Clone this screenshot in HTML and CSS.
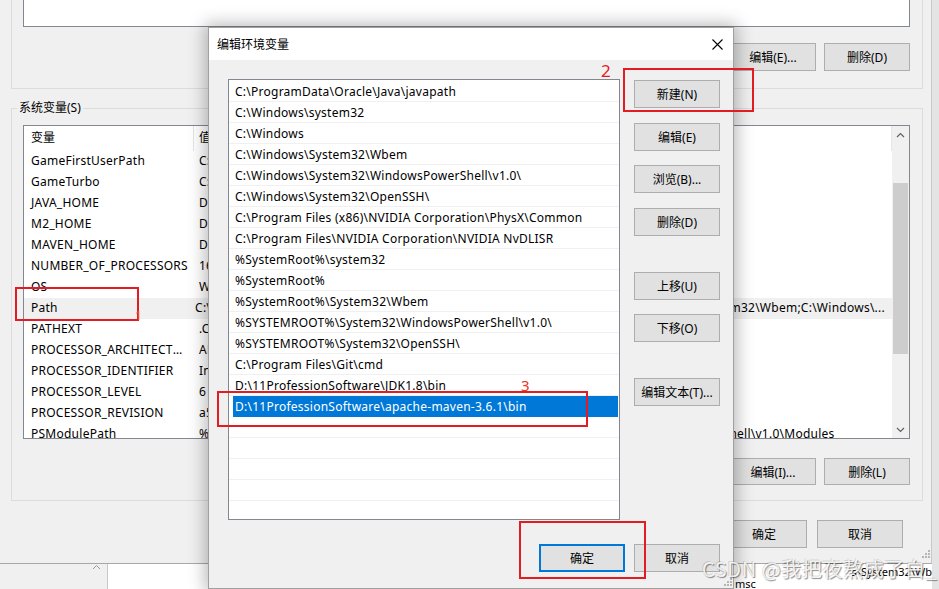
FILE: index.html
```html
<!DOCTYPE html>
<html lang="zh-CN">
<head>
<meta charset="utf-8">
<title>编辑环境变量</title>
<link rel="stylesheet" href="styles.css">
</head>
<body>
<div class="screen">
  <div class="env-window">
    <fieldset class="group user-group">
      <div class="list user-list"></div>
      <div class="btn-row">
        <button class="btn">新建(N)...</button>
        <button class="btn">编辑(E)...</button>
        <button class="btn">删除(D)</button>
      </div>
    </fieldset>

    <fieldset class="group sys-group">
      <legend>系统变量(S)</legend>
      <div class="list sys-list">
        <div class="sys-content">
          <div class="sys-head"><div class="col-name">变量</div><div class="col-val">值</div></div>
          <div class="sys-row"><div class="col-name">GameFirstUserPath</div><div class="col-val">C:\Program Files (x86)\GameFirst</div></div>
          <div class="sys-row"><div class="col-name">GameTurbo</div><div class="col-val">C:\Program Files\GameTurbo</div></div>
          <div class="sys-row"><div class="col-name">JAVA_HOME</div><div class="col-val">D:\11ProfessionSoftware\JDK1.8</div></div>
          <div class="sys-row"><div class="col-name">M2_HOME</div><div class="col-val">D:\11ProfessionSoftware\apache-maven-3.6.1</div></div>
          <div class="sys-row"><div class="col-name">MAVEN_HOME</div><div class="col-val">D:\11ProfessionSoftware\apache-maven-3.6.1</div></div>
          <div class="sys-row"><div class="col-name">NUMBER_OF_PROCESSORS</div><div class="col-val">16</div></div>
          <div class="sys-row"><div class="col-name">OS</div><div class="col-val">Windows_NT</div></div>
          <div class="sys-row is-current"><div class="col-name">Path</div><div class="col-val val-end"><span>C:\ProgramData\Oracle\Java\javapath;C:\Windows\system32;C:\Windows;C:\Windows\System32\Wbem;C:\Windows\...</span></div></div>
          <div class="sys-row"><div class="col-name">PATHEXT</div><div class="col-val">.COM;.EXE;.BAT;.CMD;.VBS;.VBE;.JS;.JSE;.WSF;.WSH;.MSC</div></div>
          <div class="sys-row"><div class="col-name">PROCESSOR_ARCHITECTURE</div><div class="col-val">AMD64</div></div>
          <div class="sys-row"><div class="col-name">PROCESSOR_IDENTIFIER</div><div class="col-val">Intel64 Family 6 Model 165 Stepping 5, GenuineIntel</div></div>
          <div class="sys-row"><div class="col-name">PROCESSOR_LEVEL</div><div class="col-val">6</div></div>
          <div class="sys-row"><div class="col-name">PROCESSOR_REVISION</div><div class="col-val">a505</div></div>
          <div class="sys-row"><div class="col-name">PSModulePath</div><div class="col-val">%ProgramFiles%\WindowsPowerShell\Modules;%SystemRoot%\system32\WindowsPowerShell\v1.0\Modules</div></div>
        </div>
        <div class="vscroll">
          <span class="arrow"><svg width="9" height="6" viewBox="0 0 9 6"><path d="M1 5 L4.5 1.5 L8 5" fill="none" stroke="#606060" stroke-width="1.2"/></svg></span>
          <div class="thumb"></div>
          <div class="track-fill"></div>
          <span class="arrow"><svg width="9" height="6" viewBox="0 0 9 6"><path d="M1 1 L4.5 4.5 L8 1" fill="none" stroke="#606060" stroke-width="1.2"/></svg></span>
        </div>
      </div>
      <div class="btn-row">
        <button class="btn">新建(W)...</button>
        <button class="btn">编辑(I)...</button>
        <button class="btn">删除(L)</button>
      </div>
    </fieldset>

    <div class="footer-row">
      <button class="btn">确定</button>
      <button class="btn">取消</button>
    </div>
    <span class="grip"><svg width="8" height="8" viewBox="0 0 8 8"><g fill="#b5b5b5"><rect x="6" y="0" width="2" height="2"/><rect x="3" y="3" width="2" height="2"/><rect x="6" y="3" width="2" height="2"/><rect x="0" y="6" width="2" height="2"/><rect x="3" y="6" width="2" height="2"/><rect x="6" y="6" width="2" height="2"/></g></svg></span>
  </div>

  <div class="right-strip"></div>

  <div class="bottom-strip">
    <div class="bs-left"><svg width="9" height="6" viewBox="0 0 9 6"><path d="M1 5 L4.5 1.5 L8 5" fill="none" stroke="#9a9a9a" stroke-width="1"/></svg></div>
    <div class="bs-white">
      <span class="bs-path">s\System32\Wb</span>
      <span class="bs-msc">msc</span>
    </div>
  </div>

  <div class="dialog">
    <div class="titlebar">
      <span class="title">编辑环境变量</span>
      <svg class="close" width="11" height="11" viewBox="0 0 11 11"><path d="M0.5 0.5 L10.5 10.5 M10.5 0.5 L0.5 10.5" stroke="#000" stroke-width="1.1"/></svg>
    </div>
    <div class="dialog-body">
      <div class="path-list">
        <div class="path-row">C:\ProgramData\Oracle\Java\javapath</div>
        <div class="path-row">C:\Windows\system32</div>
        <div class="path-row">C:\Windows</div>
        <div class="path-row">C:\Windows\System32\Wbem</div>
        <div class="path-row">C:\Windows\System32\WindowsPowerShell\v1.0\</div>
        <div class="path-row">C:\Windows\System32\OpenSSH\</div>
        <div class="path-row">C:\Program Files (x86)\NVIDIA Corporation\PhysX\Common</div>
        <div class="path-row">C:\Program Files\NVIDIA Corporation\NVIDIA NvDLISR</div>
        <div class="path-row">%SystemRoot%\system32</div>
        <div class="path-row">%SystemRoot%</div>
        <div class="path-row">%SystemRoot%\System32\Wbem</div>
        <div class="path-row">%SYSTEMROOT%\System32\WindowsPowerShell\v1.0\</div>
        <div class="path-row">%SYSTEMROOT%\System32\OpenSSH\</div>
        <div class="path-row">C:\Program Files\Git\cmd</div>
        <div class="path-row">D:\11ProfessionSoftware\JDK1.8\bin</div>
        <div class="path-row is-editing"><span class="edit">D:\11ProfessionSoftware\apache-maven-3.6.1\bin</span></div>
        <div class="path-row"></div>
        <div class="path-row"></div>
        <div class="path-row"></div>
        <div class="path-row"></div>
        <div class="path-row"></div>
      </div>
      <div class="side-buttons">
        <button class="btn b-new">新建(N)</button>
        <button class="btn b-edit">编辑(E)</button>
        <button class="btn b-browse">浏览(B)...</button>
        <button class="btn b-del">删除(D)</button>
        <button class="btn b-up">上移(U)</button>
        <button class="btn b-down">下移(O)</button>
        <button class="btn b-text">编辑文本(T)...</button>
      </div>
      <div class="dialog-footer">
        <button class="btn btn-default">确定</button>
        <button class="btn">取消</button>
      </div>
    </div>
    <span class="dlg-grip"><svg width="9" height="9" viewBox="0 0 9 9"><g fill="#b5b5b5"><rect x="7" y="1" width="2" height="2"/><rect x="4" y="4" width="2" height="2"/><rect x="7" y="4" width="2" height="2"/><rect x="1" y="7" width="2" height="2"/><rect x="4" y="7" width="2" height="2"/><rect x="7" y="7" width="2" height="2"/></g></svg></span>
  </div>

  <div class="mark mark-1"></div>
  <span class="num num-1">1</span>
  <div class="mark mark-2"></div>
  <span class="num num-2">2</span>
  <div class="mark mark-3"></div>
  <span class="num num-3">3</span>
  <div class="mark mark-4"></div>

  <div class="watermark">CSDN @我把夜熬成了白_</div>
</div>
</body>
</html>
```

FILE: styles.css
```css
* { box-sizing: border-box; }
html, body { margin: 0; padding: 0; }
body {
  width: 939px;
  height: 589px;
  overflow: hidden;
  background: #f0f0f0;
  font-family: "Noto Sans", "Noto Sans CJK SC", sans-serif;
  font-size: 12px;
  color: #000;
}
.screen {
  position: relative;
  width: 939px;
  height: 589px;
  display: grid;
  grid-template-columns: 932px 7px;
  grid-template-rows: 564px 25px;
  overflow: hidden;
}

/* ---------- background window ---------- */
.env-window {
  grid-column: 1;
  grid-row: 1;
  position: relative;
  background: #f0f0f0;
  border-bottom: 1px solid #a8a8a8;
  border-right: 1px solid #c8c8c8;
  display: flex;
  flex-direction: column;
  overflow: hidden;
}
.group {
  margin: 0 0 0 11px;
  width: 912px;
  min-width: 0;
  border: 1px solid #dcdcdc;
  padding: 0 12px 0 11px;
}
.user-group {
  margin-top: -40px;
  padding-top: 10px;
  padding-bottom: 17px;
}
.list {
  background: #fff;
  border: 1px solid #828790;
}
.user-list { height: 56px; }
.btn-row {
  display: flex;
  justify-content: flex-end;
  gap: 8px;
}
.user-group .btn-row { margin-top: 16px; }
.btn {
  width: 86px;
  height: 28px;
  padding: 0;
  background: #e1e1e1;
  border: 1px solid #adadad;
  font: inherit;
  font-size: 12px;
  color: #000;
  white-space: nowrap;
}

.sys-group {
  margin-top: 11px;
  padding: 9px 12px 15px 11px;
}
.sys-group legend {
  margin-left: -6px;
  padding: 0 2px;
  line-height: 16px;
  font-size: 12px;
}
.sys-list {
  height: 314px;
  display: flex;
}
.sys-content {
  flex: 1;
  min-width: 0;
  overflow: hidden;
  background: #fff;
}
.sys-head {
  display: flex;
  height: 25px;
  line-height: 24px;
}
.sys-head .col-name { border-right: 1px solid #e5e5e5; }
.sys-head .col-val { border-right: 1px solid #e5e5e5; }
.sys-row {
  display: flex;
  height: 21px;
  line-height: 20px;
  letter-spacing: 0.25px;
}
.sys-row.is-current { background: #f0f0f0; }
.col-name {
  width: 170px;
  flex: none;
  padding: 0 3px 0 7px;
  overflow: hidden;
  white-space: nowrap;
  text-overflow: ellipsis;
}
.col-val {
  flex: 1;
  min-width: 0;
  padding: 0 4px 0 5px;
  overflow: hidden;
  white-space: nowrap;
  text-overflow: ellipsis;
}
.val-end {
  display: flex;
  justify-content: flex-end;
  padding-right: 7px;
}
.val-end span { flex: none; }

.vscroll {
  width: 17px;
  flex: none;
  background: #f0f0f0;
  display: flex;
  flex-direction: column;
  align-items: center;
}
.arrow {
  width: 17px;
  height: 17px;
  display: flex;
  align-items: center;
  justify-content: center;
}
.thumb {
  width: 15px;
  height: 171px;
  margin-top: 40px;
  background: #cdcdcd;
}
.track-fill { flex: 1; }
.sys-group .btn-row { margin-top: 19px; }
.sys-group .btn-row .btn { height: 27px; }

.footer-row {
  display: flex;
  justify-content: flex-end;
  gap: 10px;
  margin-top: 19px;
  margin-right: 28px;
}
.grip {
  position: absolute;
  right: 1px;
  bottom: 5px;
  line-height: 0;
}

.right-strip {
  grid-column: 2;
  grid-row: 1 / span 2;
  background: #e4e4e4;
}
.bottom-strip {
  grid-column: 1;
  grid-row: 2;
  display: flex;
  background: #fff;
}
.bs-left {
  width: 108px;
  background: #f0f0f0;
  border-right: 1px solid #c8c8c8;
  display: flex;
  justify-content: flex-end;
  align-items: flex-start;
  padding: 0 6px 0 0;
  line-height: 0;
}
.bs-white {
  flex: 1;
  display: grid;
  grid-template-columns: 1fr auto;
  font-size: 11px;
  line-height: 12px;
}
.bs-path { grid-column: 2; grid-row: 1; padding-top: 2px; }
.bs-msc { grid-column: 1; grid-row: 2; padding-left: 627px; }

/* ---------- dialog ---------- */
.dialog {
  position: absolute;
  left: 208px;
  top: 27px;
  width: 526px;
  height: 562px;
  background: #f0f0f0;
  border: 1px solid #a0a0a0;
  box-shadow: 0 0 16px 3px rgba(0, 0, 0, 0.28);
}
.titlebar {
  height: 32px;
  background: #fff;
  display: flex;
  align-items: center;
  justify-content: space-between;
  padding: 0 10px 0 8px;
}
.title { font-size: 12px; }
.close { display: block; }
.dialog-body {
  display: grid;
  grid-template-columns: 392px 86px;
  column-gap: 14px;
  padding: 19px 13px 0 19px;
}
.path-list {
  height: 441px;
  background: #fff;
  border: 1px solid #828790;
  padding-top: 1px;
  overflow: hidden;
}
.path-row {
  height: 21px;
  border-bottom: 1px solid #f0f0f0;
  padding-left: 6px;
  line-height: 21px;
  white-space: nowrap;
  letter-spacing: 0.25px;
}
.path-row.is-editing {
  border-bottom: none;
  padding: 0 1px 0 4px;
}
.edit {
  display: block;
  height: 21px;
  line-height: 21px;
  padding-left: 2px;
  background: #0078d7;
  color: #fff;
}
.side-buttons {
  display: flex;
  flex-direction: column;
  padding-top: 1px;
}
.b-edit, .b-del { margin-top: 15px; }
.b-browse, .b-down { margin-top: 14px; }
.b-up, .b-text { margin-top: 36px; }
.dialog-footer {
  grid-column: 1 / -1;
  display: flex;
  justify-content: flex-end;
  gap: 9px;
  margin-top: 24px;
}
.btn-default { border: 2px solid #0078d7; }
.dlg-grip {
  position: absolute;
  right: 1px;
  bottom: 2px;
  line-height: 0;
}

/* ---------- annotations ---------- */
.mark {
  position: absolute;
  border: 2px solid #e31b23;
}
.mark-1 { left: 15px; top: 287px; width: 124px; height: 34px; }
.mark-2 { left: 623px; top: 68px; width: 131px; height: 44px; }
.mark-3 { left: 217px; top: 391px; width: 371px; height: 36px; }
.mark-4 { left: 519px; top: 521px; width: 127px; height: 58px; }
.num {
  position: absolute;
  color: #e31b23;
  line-height: 1;
  font-family: "Noto Sans", sans-serif;
}
.num-1 { left: 135px; top: 310px; font-size: 12px; color: #f05a1a; }
.num-2 { left: 601px; top: 62px; font-size: 17px; }
.num-3 { left: 521px; top: 378px; font-size: 15px; color: #f0321f; }

.watermark {
  position: absolute;
  left: 702px;
  top: 557px;
  font-family: "Noto Sans CJK SC", "Noto Sans", sans-serif;
  font-size: 20px;
  letter-spacing: 0.6px;
  line-height: 24px;
  color: rgba(250, 250, 250, 0.9);
  text-shadow: 1px 1px 1px rgba(0, 0, 0, 0.45), -1px -1px 0 rgba(0, 0, 0, 0.12);
  white-space: nowrap;
}
```
